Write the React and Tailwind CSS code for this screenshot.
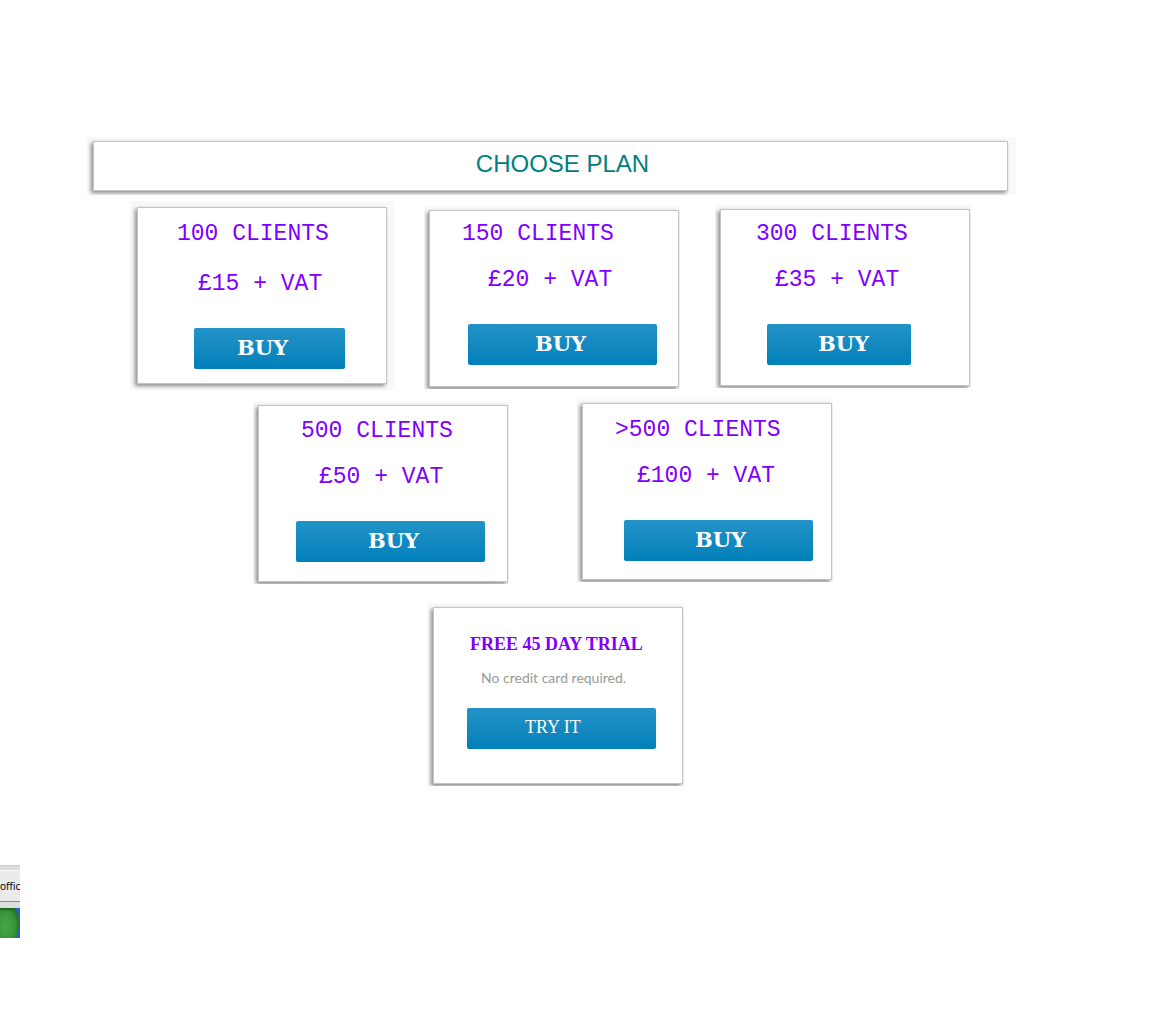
const plans = [
  {
    title: "100 CLIENTS", price: "£15 + VAT",
    frame: "pl-[7px] pr-2 pt-1.5 pb-1.5",
    card: "pt-3", titleX: "pl-[39px]", priceX: "pl-[60px] mt-[22px]",
    button: "ml-14 w-[151px] pl-[43px]",
  },
  {
    title: "150 CLIENTS", price: "£20 + VAT",
    frame: "pl-[5px] pr-px pt-1 pb-0.5 mt-[5px] ml-[29px]",
    card: "pt-[9px]", titleX: "pl-8", priceX: "pl-[58px] mt-[18px]",
    button: "ml-[38px] w-[189px] pl-[67px]",
  },
  {
    title: "300 CLIENTS", price: "£35 + VAT",
    frame: "pl-[5px] pr-px pt-1 pb-0.5 mt-1 ml-[35px]",
    card: "pt-[10px]", titleX: "pl-[35px]", priceX: "pl-[54px] mt-[18px]",
    button: "ml-[46px] w-36 pl-[51px]",
  },
  {
    title: "500 CLIENTS", price: "£50 + VAT",
    frame: "pl-[5px] pr-px pt-1 pb-0.5 mt-0.5",
    card: "pt-[11px]", titleX: "pl-[42px]", priceX: "pl-[60px] mt-[18px]",
    button: "ml-[37px] w-[189px] pl-[72px]",
  },
  {
    title: ">500 CLIENTS", price: "£100 + VAT",
    frame: "pl-[5px] pr-px pt-1 pb-0.5 ml-[68px]",
    card: "pt-3", titleX: "pl-8", priceX: "pl-[54px] mt-[18px]",
    button: "ml-[41px] w-[189px] pl-[71px]",
  },
];

const surface = "border border-[#c4c4c4] bg-white shadow-[-2px_2px_4px_rgba(0,0,0,0.45)]";
const buttonStyle =
  "block h-[41px] rounded-xs bg-linear-to-b from-[#2193c7] to-[#007fba] text-left text-white cursor-pointer";

function PlanCard({ plan }) {
  return (
    <article className={`shrink-0 overflow-hidden bg-[#f9f9f9] ${plan.frame}`}>
      <div className={`h-[177px] w-[250px] ${surface} ${plan.card}`}>
        <div className="font-['Liberation_Mono',monospace] text-[23px] leading-7 whitespace-nowrap text-[#8000ff]">
          <h2 className={plan.titleX}>{plan.title}</h2>
          <p className={plan.priceX}>{plan.price}</p>
        </div>
        <button
          type="button"
          className={`mt-[30px] pb-0.5 font-['DejaVu_Serif',serif] text-[21px] leading-8 font-bold ${buttonStyle} ${plan.button}`}
        >
          BUY
        </button>
      </div>
    </article>
  );
}

function TaskbarCorner() {
  return (
    <aside className="mt-[79px] w-5 overflow-hidden">
      <div className="h-[5px] border-t border-[#cfcfcf] bg-[#dcdcdc]" />
      <div className="flex h-8 items-center border-y border-t-[#f8f8f8] border-b-[#8c8c8c] bg-[#ebebeb] font-['Noto_Sans',sans-serif] text-[10px] text-black">
        office
      </div>
      <div className="h-1.5 bg-[#dedede]" />
      <svg className="block" width="20" height="30" viewBox="0 0 20 30" aria-hidden="true">
        <defs>
          <radialGradient id="start" cx="0.3" cy="0.6" r="0.8">
            <stop offset="0" stopColor="#47a847" />
            <stop offset="0.6" stopColor="#379537" />
            <stop offset="1" stopColor="#1f6b22" />
          </radialGradient>
        </defs>
        <rect width="20" height="30" fill="#245edb" />
        <path d="M0 0H15Q19 6 19 14Q19 23 16 30H0Z" fill="url(#start)" />
        <path d="M0 1H15" stroke="#1f6b22" strokeWidth="2" />
      </svg>
    </aside>
  );
}

export default function App() {
  return (
    <div className="min-h-screen overflow-hidden bg-white">
      <main className="pt-[137px]">
        <header className="mr-[142px] ml-[87px] overflow-hidden bg-[#f9f9f9] pt-1 pr-2 pb-1 pl-1.5">
          <div className={`h-[50px] pt-1.5 pl-6 text-center ${surface}`}>
            <h1 className="font-['Liberation_Sans',sans-serif] text-2xl text-[#008080]">CHOOSE PLAN</h1>
          </div>
        </header>
        <section className="mt-1.5 flex items-start pl-[130px]">
          {plans.slice(0, 3).map((plan) => (
            <PlanCard key={plan.title} plan={plan} />
          ))}
        </section>
        <section className="mt-[9px] flex items-start pl-[253px]">
          {plans.slice(3).map((plan) => (
            <PlanCard key={plan.title} plan={plan} />
          ))}
        </section>
        <section className="mt-[19px] flex pl-[428px]">
          <article className="overflow-hidden bg-[#f9f9f9] pt-1 pr-px pb-0.5 pl-[5px]">
            <div className={`h-[177px] w-[250px] pt-[22px] ${surface}`}>
              <h2 className="pl-9 font-['Liberation_Serif',serif] text-lg font-bold whitespace-nowrap text-[#8000ff]">
                FREE 45 DAY TRIAL
              </h2>
              <p className="mt-2.5 pl-[47px] font-['Lato',sans-serif] text-sm whitespace-nowrap text-[#999]">
                No credit card required.
              </p>
              <button
                type="button"
                className={`mt-5 ml-[33px] w-[189px] pb-1 pl-[58px] font-['Liberation_Serif',serif] text-lg ${buttonStyle}`}
              >
                TRY IT
              </button>
            </div>
          </article>
        </section>
      </main>
      <TaskbarCorner />
    </div>
  );
}
